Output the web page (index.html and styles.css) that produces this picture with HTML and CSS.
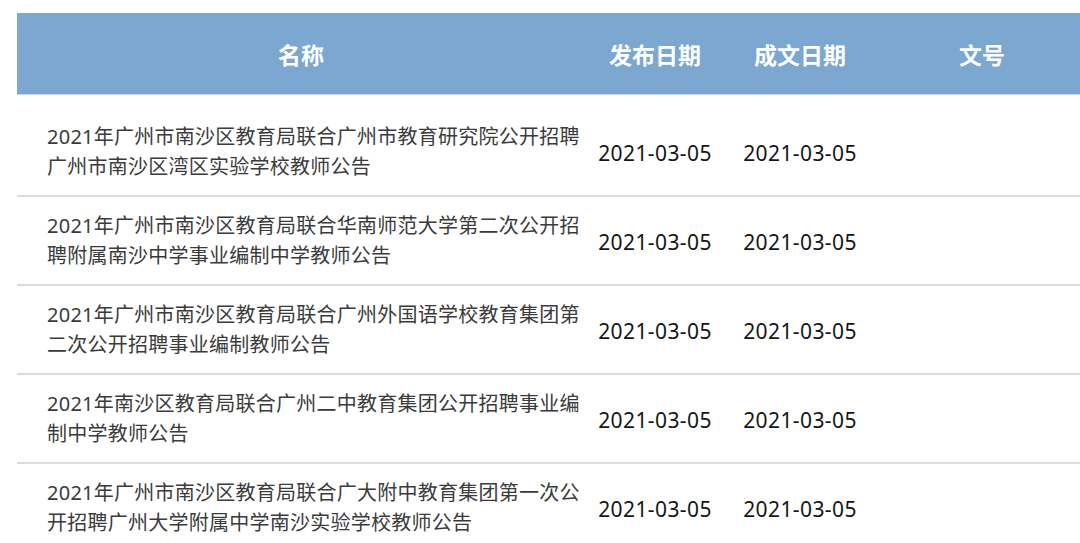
FILE: index.html
```html
<!DOCTYPE html>
<html lang="zh-CN">
<head>
<meta charset="utf-8">
<link rel="stylesheet" href="styles.css">
</head>
<body>
<div class="wrap">
<table class="list">
  <colgroup>
    <col class="c-name"><col class="c-pub"><col class="c-doc"><col class="c-no">
  </colgroup>
  <thead>
    <tr><th>名称</th><th>发布日期</th><th>成文日期</th><th>文号</th></tr>
  </thead>
  <tbody>
    <tr>
      <td class="name"><div class="txt">2021年广州市南沙区教育局联合广州市教育研究院公开招聘广州市南沙区湾区实验学校教师公告</div></td>
      <td class="date">2021-03-05</td><td class="date">2021-03-05</td><td></td>
    </tr>
    <tr>
      <td class="name"><div class="txt">2021年广州市南沙区教育局联合华南师范大学第二次公开招聘附属南沙中学事业编制中学教师公告</div></td>
      <td class="date">2021-03-05</td><td class="date">2021-03-05</td><td></td>
    </tr>
    <tr>
      <td class="name"><div class="txt">2021年广州市南沙区教育局联合广州外国语学校教育集团第二次公开招聘事业编制教师公告</div></td>
      <td class="date">2021-03-05</td><td class="date">2021-03-05</td><td></td>
    </tr>
    <tr>
      <td class="name"><div class="txt">2021年南沙区教育局联合广州二中教育集团公开招聘事业编制中学教师公告</div></td>
      <td class="date">2021-03-05</td><td class="date">2021-03-05</td><td></td>
    </tr>
    <tr>
      <td class="name"><div class="txt">2021年广州市南沙区教育局联合广大附中教育集团第一次公开招聘广州大学附属中学南沙实验学校教师公告</div></td>
      <td class="date">2021-03-05</td><td class="date">2021-03-05</td><td></td>
    </tr>
  </tbody>
</table>
</div>
</body>
</html>
```

FILE: styles.css
```css
html, body {
  margin: 0;
  padding: 0;
  background: #ffffff;
  overflow: hidden;
}
.wrap {
  padding: 13px 0 0 17px;
  width: 1100px;
}
.list {
  border-collapse: collapse;
  table-layout: fixed;
  width: 1072px;
  font-family: "Noto Sans", "Noto Sans CJK SC", sans-serif;
}
.c-name { width: 568px; }
.c-pub { width: 140px; }
.c-doc { width: 150px; }
.c-no { width: 214px; }
.list thead th {
  background: #7ba7d0;
  color: #ffffff;
  font-family: "Noto Sans CJK SC", sans-serif;
  font-weight: 700;
  font-size: 23px;
  height: 81px;
  padding: 0;
  text-align: center;
  border-bottom: 1px solid #c9dbee;
}
.list tbody td {
  border-bottom: 2px solid #dcdcdc;
  padding: 14px 0 13px;
  vertical-align: middle;
}
.list tbody tr:first-child td {
  padding-top: 27px;
}
.name {
  padding-left: 30px !important;
}
.txt {
  width: 540px;
  font-size: 20px;
  letter-spacing: 0.25px;
  line-height: 30px;
  color: #3b3b3b;
}
.date {
  text-align: center;
  font-size: 21px;
  letter-spacing: 0.4px;
  color: #151515;
  padding-top: 16px !important;
}
.list tbody tr:first-child td.date {
  padding-top: 29px !important;
}
```
